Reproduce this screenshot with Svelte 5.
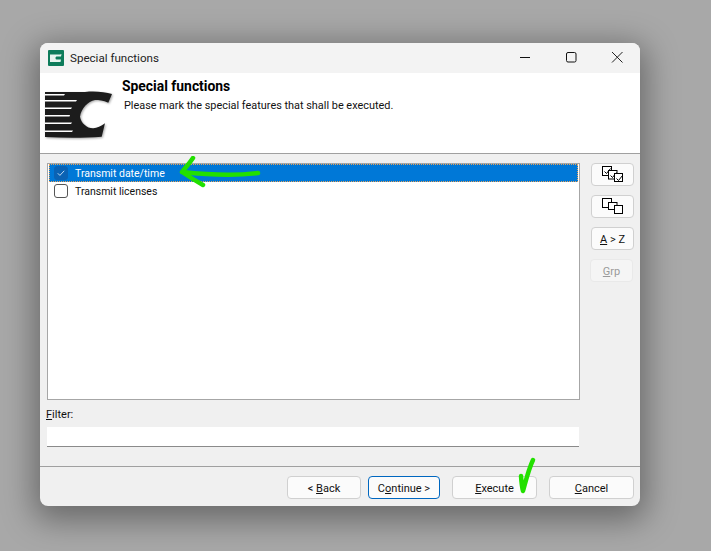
<script>
  const rows = [
    { label: "Transmit date/time", checked: true },
    { label: "Transmit licenses", checked: false },
  ];
</script>

<div class="page">
  <div class="window">
    <div class="titlebar">
      <svg class="appicon" viewBox="0 0 16 16">
        <rect width="16" height="16" rx="1" fill="#0e7c5b" />
        <path d="M2 4.500h10l1.500-.5-.5 2.500h-4c-1 0-1.500 .5-1.500 1.500s.5 1.500 1.500 1.500h4l-.5 2.500H2z" fill="#e8f5ef" />
      </svg>
      <span class="title">Special functions</span>
      <div class="controls">
        <svg viewBox="0 0 46 30"><path d="M18 14.500h10" stroke="#111" fill="none" /></svg>
        <svg viewBox="0 0 46 30"><rect x="18.500" y="9.500" width="9.500" height="9.500" rx="1.500" stroke="#111" fill="none" /></svg>
        <svg viewBox="0 0 46 30"><path d="M18 9l10.500 10.500M28.500 9L18 19.500" stroke="#222" fill="none" /></svg>
      </div>
    </div>

    <header class="head">
      <svg class="logo" viewBox="0 0 68 48">
        <path
          d="M0 1H40C50 0 60 1 67 3L63.300 11.700C58 9.500 54 9 50 9C43 10 36 18 35 25.700C36 32 42 37.500 48.300 37.300C52 37 56 35 60 32.300L56.700 45.700C40 47 20 47 0 46Z"
          fill="#1c1c1c"
        />
        <g fill="#fff">
          <path d="M0 3H20L19 4.500H0Z" />
          <path d="M0 9H32L31 10.500H0Z" />
          <path d="M0 16.500H27L26 18H0Z" />
          <path d="M0 24H25L24.500 25.500H0Z" />
          <path d="M0 31.500H27L26 33H0Z" />
          <path d="M0 39.500H28L27 41H0Z" />
        </g>
      </svg>
      <div class="headtext">
        <h1>Special functions</h1>
        <p>Please mark the special features that shall be executed.</p>
      </div>
    </header>

    <main class="body">
      <div class="upper">
        <div class="left">
          <div class="list">
            {#each rows as row}
              <div class="row" class:selected={row.checked}>
                <span class="box">
                  {#if row.checked}
                    <svg viewBox="0 0 13 13"><path d="M3 6.800l2.300 2.300 4.700-5" stroke="#cfe4f7" fill="none" /></svg>
                  {/if}
                </span>
                <span>{row.label}</span>
              </div>
            {/each}
          </div>
          <label class="filter" for="filter"><u>F</u>ilter:</label>
          <input id="filter" class="filterinput" type="text" />
        </div>

        <div class="side">
          <button class="btn sidebtn" aria-label="Select all">
            <svg viewBox="0 0 36 20" width="36" height="20">
              <g fill="#fff" stroke="#000">
                <rect x="7.500" y="2.500" width="9" height="9" />
                <path d="M9.500 7.500l2 2 4-5" fill="none" />
                <rect x="13.500" y="6.500" width="8.500" height="8.500" />
                <path d="M15.500 11.500l2 2 4-5" fill="none" />
                <rect x="19.500" y="9.500" width="8" height="8" />
                <path d="M21.500 14.500l2 2 4-5" fill="none" />
              </g>
            </svg>
          </button>
          <button class="btn sidebtn" aria-label="Select none">
            <svg viewBox="0 0 36 20" width="36" height="20">
              <g fill="#fff" stroke="#000">
                <rect x="7.500" y="2.500" width="9" height="9" />
                <rect x="13.500" y="6.500" width="8.500" height="7" />
                <rect x="19.500" y="9.500" width="8" height="8" />
              </g>
            </svg>
          </button>
          <button class="btn sidebtn"><u>A</u>&nbsp;&gt;&nbsp;Z</button>
          <button class="btn sidebtn disabled"><u>G</u>rp</button>
        </div>
      </div>
    </main>

    <footer class="foot">
      <button class="btn back">&lt;&nbsp;<u>B</u>ack</button>
      <button class="btn cont">C<u>o</u>ntinue &gt;</button>
      <button class="btn exec"><u>E</u>xecute</button>
      <button class="btn cancel"><u>C</u>ancel</button>
    </footer>

    <svg class="scribble arrow" viewBox="0 0 90 34">
      <path d="M83 17C60 20 35 19 7 16M18 2C14 8 10 12 7 16C13 20 21 25 28 29" />
    </svg>
    <svg class="scribble tick" viewBox="0 0 24 42">
      <path d="M7 20C7.500 27 8 31 9 35C12 24 15 12 19 4" />
    </svg>
  </div>
</div>

<style>
  :global(body) {
    margin: 0;
    background: #a8a8a8;
  }
  .page {
    width: 711px;
    height: 551px;
    overflow: hidden;
    padding: 43px 0 0 40px;
    box-sizing: border-box;
    font-family: Roboto, "Liberation Sans", sans-serif;
    font-size: 11px;
    color: #111;
  }
  .window {
    position: relative;
    width: 600px;
    height: 463px;
    background: #f0f0f0;
    border-radius: 8px;
    box-shadow: 0 8px 32px 6px rgba(0, 0, 0, 0.38);
    display: flex;
    flex-direction: column;
  }
  .titlebar {
    height: 30px;
    display: flex;
    align-items: center;
    padding-left: 8px;
    background: #f3f3f3;
    border-radius: 8px 8px 0 0;
    flex: none;
  }
  .appicon {
    width: 16px;
    height: 16px;
    margin-right: 6px;
    margin-top: -1px;
  }
  .title {
    font-size: 11.600px;
    color: #222;
    margin-top: -1px;
  }
  .controls {
    margin-left: auto;
    display: flex;
  }
  .controls svg {
    width: 46px;
    height: 30px;
  }
  .head {
    height: 80px;
    background: #fff;
    border-bottom: 1px solid #a0a0a0;
    display: flex;
    flex: none;
    padding-left: 5px;
  }
  .logo {
    width: 68px;
    height: 48px;
    margin-top: 18px;
    filter: drop-shadow(1px 1px 1px rgba(0, 0, 0, 0.35));
  }
  .headtext {
    margin-left: 9px;
  }
  h1 {
    margin: 5px 0 0;
    font-size: 13.900px;
    line-height: 16px;
    font-weight: 700;
    color: #000;
  }
  .headtext p {
    margin: 4px 0 0 2px;
    font-size: 10.900px;
    line-height: 15px;
    color: #111;
  }
  .body {
    flex: 1;
    padding: 9px 6px 0 7px;
  }
  .upper {
    display: flex;
    gap: 11px;
  }
  .left {
    width: 533px;
  }
  .list {
    box-sizing: border-box;
    height: 237px;
    background: #fff;
    border: 1px solid #a6a6a6;
    padding: 0 1px;
  }
  .row {
    height: 18px;
    display: flex;
    align-items: center;
    gap: 7px;
    padding-left: 5px;
    font-size: 10.500px;
  }
  .row.selected {
    background: #0078d7;
    color: #fff;
    outline: 1px dotted #e8a35a;
    outline-offset: -1px;
  }
  .box {
    width: 12px;
    height: 12px;
    border: 1px solid #555;
    border-radius: 3px;
    background: #fff;
    display: flex;
  }
  .selected .box {
    background: #0a62b4;
    border-color: #0a62b4;
  }
  .filter {
    display: block;
    margin: 7px 0 0 -1px;
    line-height: 15px;
  }
  .filterinput {
    display: block;
    box-sizing: border-box;
    width: 532px;
    height: 20px;
    margin-top: 5px;
    border: none;
    border-bottom: 1px solid #8a8a8a;
    background: #fff;
    padding: 0;
  }
  .side {
    display: flex;
    flex-direction: column;
    gap: 9px;
  }
  .btn {
    box-sizing: border-box;
    height: 23px;
    border: 1px solid #d0d0d0;
    border-radius: 4px;
    background: #fbfbfb;
    font-family: inherit;
    font-size: 11px;
    color: #111;
    padding: 1px 0 0;
    display: flex;
    align-items: center;
    justify-content: center;
  }
  .btn svg {
    margin-top: -2px;
  }
  .sidebtn {
    width: 43px;
  }
  .sidebtn.disabled {
    background: #f5f5f5;
    border-color: #e9e9e9;
    color: #9a9a9a;
    margin-left: -1px;
  }
  .foot {
    height: 30px;
    flex: none;
    border-top: 1px solid #a0a0a0;
    display: flex;
    padding: 9px 0 0 247px;
  }
  .back { width: 74px; margin-right: 7px; }
  .cont { width: 72px; margin-right: 12px; border-color: #0067c0; }
  .exec { width: 85px; margin-right: 12px; }
  .cancel { width: 85px; }
  .scribble {
    position: absolute;
    fill: none;
    stroke: #22e000;
    stroke-width: 4.500;
    stroke-linecap: round;
    stroke-linejoin: round;
  }
  .arrow {
    left: 135px;
    top: 113px;
    width: 90px;
    height: 34px;
  }
  .tick {
    left: 474px;
    top: 413px;
    width: 24px;
    height: 42px;
  }
</style>
